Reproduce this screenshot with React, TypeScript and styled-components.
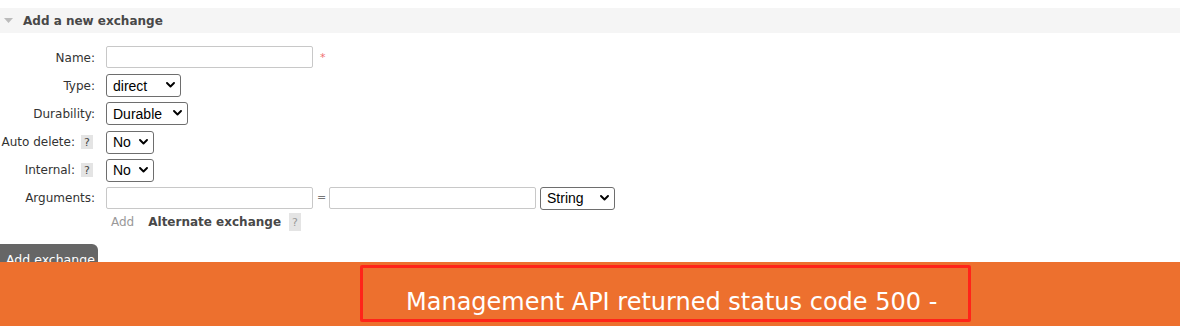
import styled, {createGlobalStyle} from "styled-components";
import {ReactNode} from "react";

const GlobalStyle = createGlobalStyle`
  body {
    margin: 0;
    background: #fff;
    font-family: "DejaVu Sans", Verdana, sans-serif;
    font-size: 12px;
    color: #484848;
  }
`
const Page = styled.div`
  padding-top: 8px;
  height: 318px;
  overflow: hidden;
`
const SectionHeader = styled.div`
  display: flex;
  align-items: center;
  height: 25px;
  background: #f5f5f5;
  padding-left: 4px;
  gap: 10px;
  h2 {
    margin: 0;
    font-size: 12px;
    font-weight: bold;
    color: #484848;
  }
`
const Form = styled.div`
  display: grid;
  grid-template-columns: 95px 1fr;
  column-gap: 11px;
  grid-auto-rows: 28.2px;
  margin-top: 13px;
`
const Label = styled.div`
  display: flex;
  justify-content: flex-end;
  align-items: center;
  height: 23px;
  gap: 6px;
  color: #333;
  white-space: nowrap;
`
const Cell = styled.div`
  display: flex;
  align-items: flex-start;
  gap: 4px;
`
const Help = styled.span<{ $tall?: boolean }>`
  display: inline-flex;
  align-items: center;
  justify-content: center;
  width: 12px;
  height: ${p => p.$tall ? 18 : 14}px;
  background: #e4e4e4;
  color: ${p => p.$tall ? '#999' : '#444'};
  font-size: 11px;
  margin-right: ${p => p.$tall ? 0 : 2}px;
`
const TextInput = styled.input`
  box-sizing: border-box;
  width: 207px;
  height: 22px;
  border: 1px solid #c8c8c8;
  border-radius: 2px;
  margin: 0;
  padding: 0 4px;
`
const Required = styled.span`
  color: #f07070;
  font-size: 11px;
  margin-left: 3px;
  margin-top: 5px;
`
const Equals = styled.span`
  color: #777;
  font-size: 11px;
  line-height: 22px;
  width: 8px;
  text-align: center;
`
const SelectWrap = styled.div<{ $w: number }>`
  position: relative;
  width: ${p => p.$w}px;
  height: 23px;
  select {
    appearance: none;
    box-sizing: border-box;
    width: 100%;
    height: 100%;
    margin: 0;
    padding: 0 0 0 6px;
    border: 1px solid #6e6e6e;
    border-radius: 3px;
    background: #fff;
    color: #000;
    font-family: "Liberation Sans", Arial, sans-serif;
    font-size: 14px;
  }
  svg {
    position: absolute;
    right: 6px;
    top: 8px;
    pointer-events: none;
  }
`
const AddRow = styled.div`
  display: flex;
  align-items: center;
  margin-top: -2px;
  height: 18px;
  padding-left: 5px;
  .add {
    color: #999;
    margin-right: 14px;
  }
  .alt {
    font-weight: bold;
    color: #484848;
    margin-right: 8px;
  }
`
const SubmitButton = styled.button`
  display: block;
  margin-top: 1px;
  width: 98px;
  height: 30px;
  border: none;
  border-radius: 0 6px 6px 0;
  background: #666;
  color: #fff;
  font-family: "DejaVu Sans", Verdana, sans-serif;
  font-size: 12.5px;
  text-align: left;
  padding: 0 0 0 6px;
`
const StatusBar = styled.div`
  position: fixed;
  left: 0;
  right: 0;
  bottom: 0;
  height: 64px;
  background: #ed702e;
  display: flex;
  align-items: flex-start;
  padding-left: 360px;
  box-sizing: border-box;
`
const Highlight = styled.div`
  box-sizing: border-box;
  margin-top: 3px;
  width: 611px;
  height: 57px;
  border: 3px solid #ff2419;
  border-radius: 2px;
  color: #fff;
  font-size: 24px;
  padding: 20px 0 0 43px;
  line-height: 28px;
  white-space: nowrap;
`

const Chevron = () =>
    <svg width="9" height="6" viewBox="0 0 9 6">
        <path d="M1 1 L4.5 4.5 L8 1" fill="none" stroke="#000" strokeWidth="1.9" strokeLinecap="round"
              strokeLinejoin="round"/>
    </svg>

const Select = (props: { width: number, options: string[] }) =>
    <SelectWrap $w={props.width}>
        <select defaultValue={props.options[0]}>
            {props.options.map(o => <option key={o}>{o}</option>)}
        </select>
        <Chevron/>
    </SelectWrap>

const Row = (props: { label: string, help?: boolean, children: ReactNode }) => <>
    <Label>{props.label}{props.help && <Help>?</Help>}</Label>
    <Cell>{props.children}</Cell>
</>

const App = () => {
    return <Page>
        <GlobalStyle/>
        <SectionHeader>
            <svg width="9" height="5" viewBox="0 0 9 5">
                <path d="M0 0 H9 L4.5 5 Z" fill="#bbb"/>
            </svg>
            <h2>Add a new exchange</h2>
        </SectionHeader>
        <Form>
            <Row label="Name:">
                <TextInput/>
                <Required>*</Required>
            </Row>
            <Row label="Type:">
                <Select width={75} options={['direct', 'fanout', 'headers', 'topic']}/>
            </Row>
            <Row label="Durability:">
                <Select width={82} options={['Durable', 'Transient']}/>
            </Row>
            <Row label="Auto delete:" help>
                <Select width={48} options={['No', 'Yes']}/>
            </Row>
            <Row label="Internal:" help>
                <Select width={48} options={['No', 'Yes']}/>
            </Row>
            <Row label="Arguments:">
                <TextInput/>
                <Equals>=</Equals>
                <TextInput/>
                <Select width={75} options={['String', 'Number', 'Boolean', 'List']}/>
            </Row>
            <div/>
            <AddRow>
                <span className="add">Add</span>
                <span className="alt">Alternate exchange</span>
                <Help $tall>?</Help>
            </AddRow>
        </Form>
        <SubmitButton>Add exchange</SubmitButton>
        <StatusBar>
            <Highlight>Management API returned status code 500 -</Highlight>
        </StatusBar>
    </Page>
}

export default App
